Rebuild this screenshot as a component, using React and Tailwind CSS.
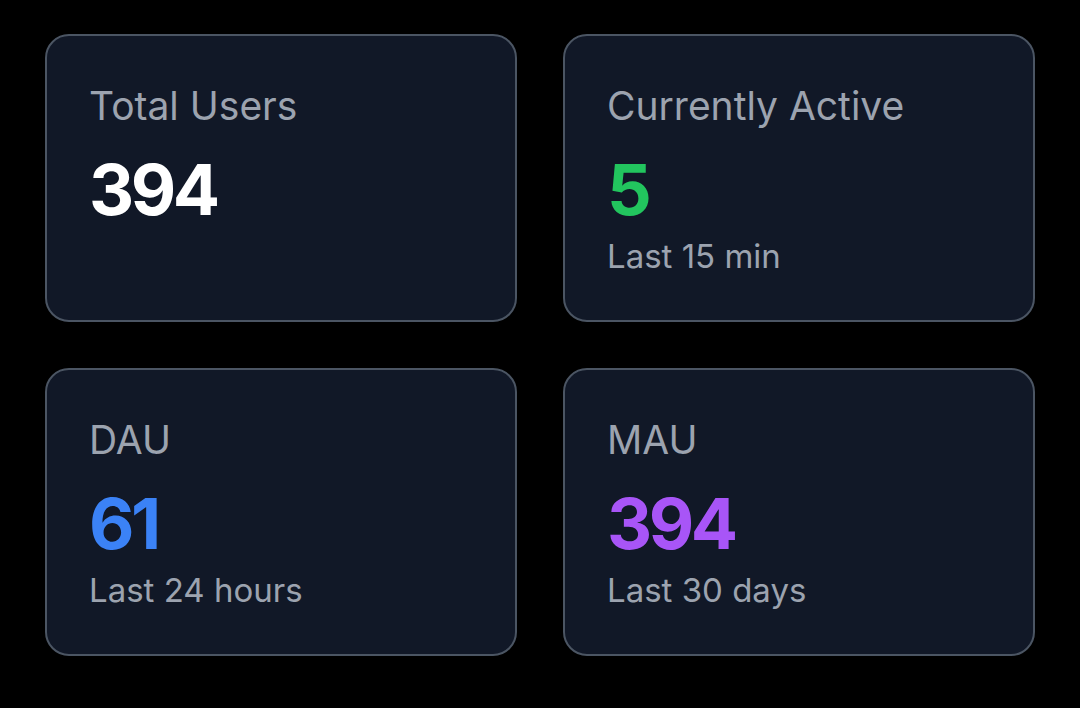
const stats = [
  { label: 'Total Users', value: '394', color: 'text-white' },
  { label: 'Currently Active', value: '5', color: 'text-[#22c55e]', sub: 'Last 15 min' },
  { label: 'DAU', value: '61', color: 'text-[#3b82f6]', sub: 'Last 24 hours' },
  { label: 'MAU', value: '394', color: 'text-[#a855f7]', sub: 'Last 30 days' },
]

function StatCard({ label, value, color, sub }) {
  return (
    <div className="bg-[#111827] border-2 border-[#4b5563] rounded-[24px] p-[42px] flex flex-col">
      <h3 className="text-[39px] leading-[56px] text-[#9ca3af]">{label}</h3>
      <p className={`mt-4 text-[70px] leading-[80px] font-bold tracking-[-0.05em] ${color}`}>{value}</p>
      {sub && <p className="mt-[2px] text-[33px] leading-[48px] text-[#9ca3af]">{sub}</p>}
    </div>
  )
}

export default function App() {
  return (
    <div
      className="min-h-[708px] w-[1080px] bg-black px-[45px] pt-[34px]"
      style={{ fontFamily: 'Inter, "Noto Sans", sans-serif' }}
    >
      <div className="grid grid-cols-2 gap-[46px] auto-rows-[288px]">
        {stats.map((s) => (
          <StatCard key={s.label} {...s} />
        ))}
      </div>
    </div>
  )
}
